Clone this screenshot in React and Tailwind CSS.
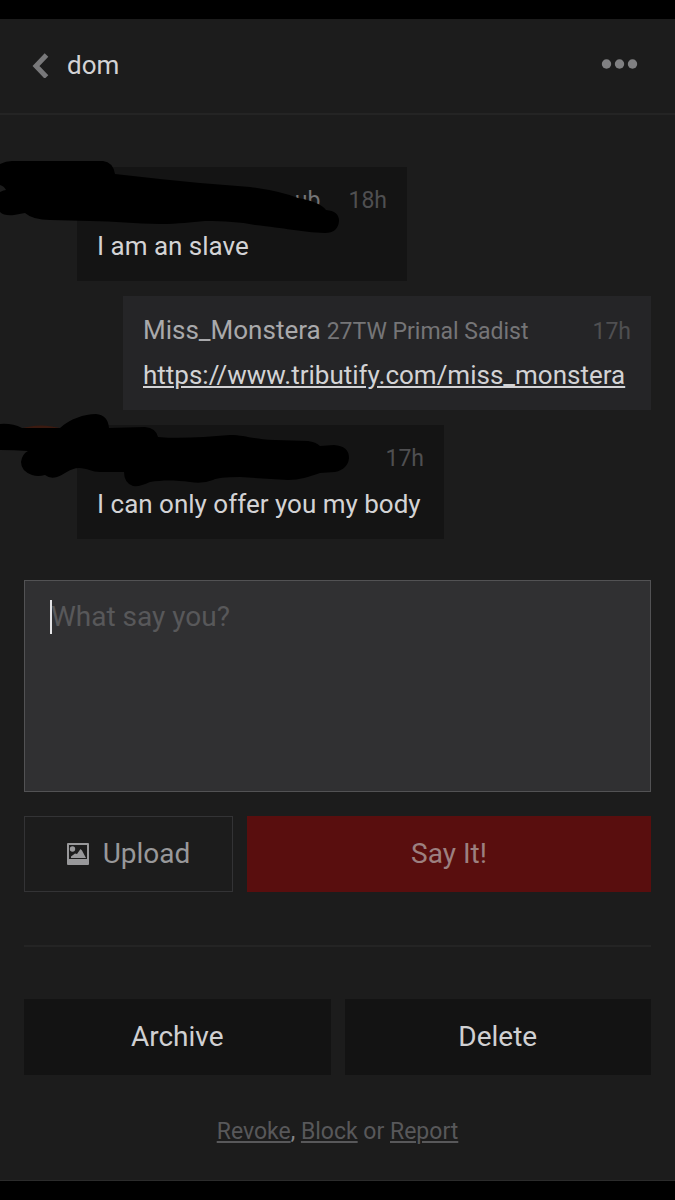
const MESSAGES = [
  { id: 1, mine: false, tag: "ub", time: "18h", text: "I am an slave", width: "min-w-[330px]" },
  {
    id: 2,
    mine: true,
    name: "Miss_Monstera",
    tag: "27TW Primal Sadist",
    time: "17h",
    link: "https://www.tributify.com/miss_monstera",
    width: "min-w-[528px]",
  },
  { id: 3, mine: false, time: "17h", text: "I can only offer you my body", width: "min-w-[367px]" },
];

// Marker strokes over the other person's avatar and name
const Scribble = ({ id }) => {
  if (id === 1) {
    return (
      <svg className="absolute -top-4 -left-6" width="351" height="90" viewBox="0 151 351 90" aria-hidden="true">
        <path
          fill="#000"
          d="M0 164 Q6 161 12 161 H103 Q113 162 115 174 L160 179 L200 183 L250 187 Q280 191 298 198 Q320 202 326 210 Q339 211 339 221 Q338 233 325 233 C300 232 285 228 255 225 C240 222 225 221 205 221 C190 222 180 224 160 224 C135 224 115 221 90 221 L50 220 Q33 220 25 213 L14 215 Q4 216 0 212 V192 Q4 190 6 190 Q4 186 0 185 Z"
        />
      </svg>
    );
  }
  return (
    <svg className="absolute -top-4 -left-6" width="351" height="90" viewBox="0 408 351 90" aria-hidden="true">
      <path fill="#3b1a10" d="M20 428 Q40 421 63 428 Z" />
      <path
        fill="#000"
        d="M0 423 Q12 422 22 427 H60 C70 418 84 413 96 413 Q108 414 109 427 L145 426 Q156 427 158 436 C180 438 205 436 230 434 C245 434 250 438 275 439 L308 440 Q316 441 320 445 L334 444 Q349 445 349 457 Q348 468 335 471 L320 472 C308 476 300 479 288 479 L240 476 Q218 476 213 479 Q203 483 190 481 C175 479 162 479 150 481 Q140 486 133 485 Q124 482 124 471 H100 C92 471 87 467 79 467 C70 467 64 474 57 476 Q50 478 45 474 Q38 476 32 474 Q21 470 21 461 Q22 453 28 450 Q14 449 0 449 Z"
      />
    </svg>
  );
};

const Message = ({ message }) => {
  const { id, mine, name, tag, time, text, link, width } = message;
  return (
    <article className={`relative flex ${mine ? "justify-end" : "pl-[53px]"}`}>
      <div className={`px-5 py-4 ${mine ? "bg-[#252527]" : "bg-[#141414]"} ${width}`}>
        <header className="flex h-9 items-baseline gap-[6px] text-[23px] leading-9">
          {name && <span className="text-[26px] text-[#a9a9ab]">{name}</span>}
          {tag && <span className={`text-[#757577] ${mine ? "" : "ml-auto pr-[22px]"}`}>{tag}</span>}
          <time className={`text-[#4f4f51] ${tag && !mine ? "" : "ml-auto"}`}>{time}</time>
        </header>
        <p className="mt-2 text-[26px] leading-[38px] text-[#d3d3d5]">
          {link ? (
            <a href={link} className="underline">
              {link}
            </a>
          ) : (
            text
          )}
        </p>
      </div>
      {!mine && <Scribble id={id} />}
    </article>
  );
};

const ImageIcon = () => (
  <svg width="22" height="22" viewBox="0 0 22 22" fill="currentColor" aria-hidden="true">
    <path
      fillRule="evenodd"
      d="M1 0 H21 Q22 0 22 1 V21 Q22 22 21 22 H1 Q0 22 0 21 V1 Q0 0 1 0 Z M2 2 V16 H20 V2 Z"
    />
    <circle cx="5.500" cy="6" r="2.700" />
    <path d="M4 15 V13.500 L8 10.500 L10 11 L13.500 6 L15 7.500 L19 15 Z" />
  </svg>
);

const App = () => {
  return (
    <div className="min-h-screen bg-black py-[19px] font-['Roboto',sans-serif]">
      <div className="border-b border-[#2b2b2b] bg-[#1c1c1c]">
        <header className="flex h-24 items-center justify-between border-b-2 border-[#242424] pr-9 pb-[2px] pl-8">
          <a href="#inbox" className="flex items-center gap-4 text-[26px] text-[#d3d3d5]">
            <svg width="19" height="26" viewBox="0 0 19 26" aria-hidden="true">
              <path d="M14.500 3 L4 14 L14.500 25" fill="none" stroke="#78787a" strokeWidth="5" />
            </svg>
            dom
          </a>
          <button type="button" aria-label="More options" className="text-[#808082]">
            <svg width="38" height="12" viewBox="0 0 38 12" fill="currentColor">
              <circle cx="5.500" cy="5" r="4.700" />
              <circle cx="18.500" cy="5" r="4.700" />
              <circle cx="31.500" cy="5" r="4.700" />
            </svg>
          </button>
        </header>

        <main className="px-6 pt-[52px]">
          <section className="flex flex-col gap-[15px]">
            {MESSAGES.map((message) => (
              <Message key={message.id} message={message} />
            ))}
          </section>

          <form className="mt-[41px]" onSubmit={(e) => e.preventDefault()}>
            <div className="relative">
              <textarea
                aria-label="Message"
                placeholder="What say you?"
                className="block h-[212px] w-full resize-none border border-[#525254] bg-[#303032] px-[26px] py-[18px] text-[28px] leading-9 text-[#d3d3d5] placeholder-[#58585a] outline-none"
              />
              <span className="absolute top-5 left-[26px] h-[34px] w-[2px] bg-[#e4e4e6]"></span>
            </div>
            <div className="mt-6 flex gap-[14px] text-[28px]">
              <button
                type="button"
                className="flex h-[76px] w-1/3 items-center justify-center gap-[14px] border border-[#333335] text-[#98989a]"
              >
                <ImageIcon />
                Upload
              </button>
              <button type="submit" className="h-[76px] flex-1 bg-[#590e0e] text-[#9c8080]">
                Say It!
              </button>
            </div>
          </form>

          <hr className="mt-[53px] border-t-2 border-[#242424]" />

          <div className="mt-[52px] grid grid-cols-2 gap-[14px] text-[28px] text-[#d0d0d2]">
            <button type="button" className="h-[76px] bg-[#131313]">
              Archive
            </button>
            <button type="button" className="h-[76px] bg-[#131313]">
              Delete
            </button>
          </div>

          <p className="pt-[38px] pb-[29px] text-center text-[23px] leading-[38px] text-[#58585a]">
            <a href="#revoke" className="underline">Revoke</a>
            <span className="text-[#858587]">,</span>{" "}
            <a href="#block" className="underline">Block</a> or{" "}
            <a href="#report" className="underline">Report</a>
          </p>
        </main>
      </div>
    </div>
  );
};

export default App;
